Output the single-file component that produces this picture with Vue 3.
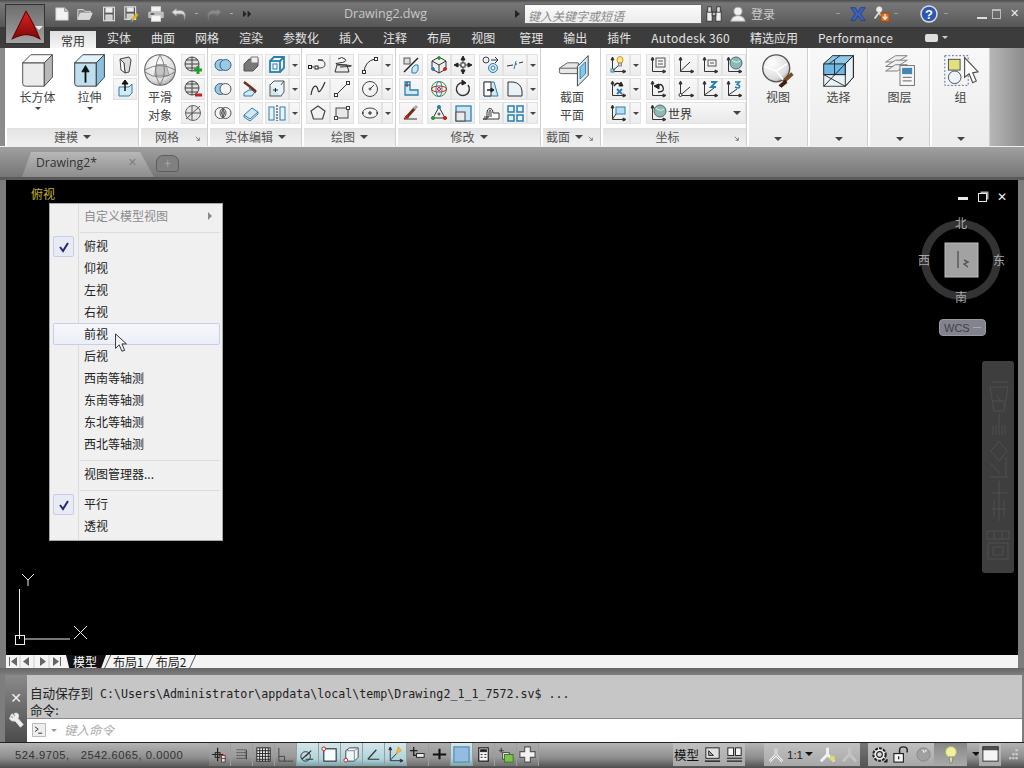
<script setup>
import { h } from 'vue'

const P = (d, s = '#444', f = 'none', w = 1) => `<path d="${d}" stroke="${s}" fill="${f}" stroke-width="${w}"/>`
const C = (x, y, r, s = '#444', f = 'none', w = 1) => `<circle cx="${x}" cy="${y}" r="${r}" stroke="${s}" fill="${f}" stroke-width="${w}"/>`
const R = (x, y, w, ht, s = '#444', f = 'none', sw = 1) => `<rect x="${x}" y="${y}" width="${w}" height="${ht}" stroke="${s}" fill="${f}" stroke-width="${sw}"/>`
const B = '#2b7fb0', L = '#bfe0f0', D = '#444', K = '#222', O = 'none'
const axes = (c = D) => P('M4.5 3V16.5H17', c) + P('M4.5 2L3 5H6Z', c, c) + P('M18 16.5L15 15V18Z', c, c)

const icons = {
  box: P('M3 12H27V38H6Q3 38 3 35Z', D, '#ececec') + P('M3 12L12 3H36L27 12Z', D, '#f9f9f9') + P('M27 12L36 3V28L27 38Z', D, '#b8b8b8'),
  extrude: P('M3 12H27V38H6Q3 38 3 35Z', '#333', '#bfdfee') + P('M3 12L12 3H36L27 12Z', '#333', '#e2f2fa') + P('M27 12L36 3V28L27 38Z', '#333', '#8cc0dc') + P('M15 34V20', '#111', O, 2) + P('M15 15L11 22H19Z', '#111', '#111'),
  sphere: '<defs><radialGradient id="sg" cx=".4" cy=".3" r=".8"><stop offset="0" stop-color="#fff"/><stop offset=".7" stop-color="#ddd"/><stop offset="1" stop-color="#999"/></radialGradient></defs>' + C(20, 20, 17, '#666', 'url(#sg)', 1.2) + P('M16 14H27L30 26H14Z', '#999', '#c4c4c4') + P('M3 20Q20 10 37 20M3 22Q20 34 37 22M20 3Q10 20 20 37M20 3Q30 20 20 37', '#777'),
  section: P('M6 18L15 12H27V24H8Q6 24 6 22Z', '#555', '#e8e8e8') + P('M6 18H27', '#555') + P('M26 16L38 4V26L26 38Z', '#333', '#d8e8f0') + P('M29 17L35 11V24L29 30Z', B, '#8cc4e4'),
  view: '<defs><radialGradient id="vg" cx=".35" cy=".3" r=".85"><stop offset="0" stop-color="#fff"/><stop offset=".7" stop-color="#ddd"/><stop offset="1" stop-color="#888"/></radialGradient></defs>' + C(18, 17, 15, '#555', 'url(#vg)', 1.5) + P('M5 15L18 20L30 12M18 20L26 30', '#fff', O, 2) + P('M26 32L36 23', '#7a4a20', O, 4) + P('M21 36L28 30L30 33L24 38Z', '#402010', '#402010'),
  select: P('M3 12L13 3H36V27L27 37H3Z', '#333', '#e8f2f8') + P('M3 12H27V24H3Z', '#333', '#6fb8e4') + P('M3 12L13 3H36L27 12Z', '#333', '#8ec8ea') + P('M3 24L27 37M27 12V37M27 12L36 3V27L27 37M15 8V24M3 24H27M21 3L9 12', '#222') + P('M3 37L27 12', '#111'),
  layer: P('M4 10L15 3H28L17 10Z', '#777', '#efefef') + P('M4 15L15 8H28L17 15Z', '#777', '#efefef') + P('M4 20L15 13H28L17 20Z', '#777', '#efefef') + R(20, 14, 16, 22, '#666', '#f8f8f8') + R(23, 17, 10, 6, B, '#4f82ad') + P('M23 27H33M23 31H33', '#555'),
  group: R(2, 3, 26, 33, '#4a5a9a', O, 1).replace('/>', ' stroke-dasharray="2 2"/>') + R(6, 7, 13, 12, '#444', '#e0e080') + C(13, 27, 7, '#444', '#eef4fa') + P('M24 5V27L29 23L33 33L37 31L33 22L39 21Z', '#555', '#fff', 1.3),
  wedge: P('M5 4L14 2L16 5L14 17L10 18L9 8Z', D, '#ddd') + P('M5 4L9 8L10 18L6 15Z', D, '#fff'),
  press: P('M4 8H14L17 5V14L14 17H4Z', '#2b7fb0', '#d4e8f2') + P('M10 12V4', '#111', O, 1.5) + P('M10 1L7 5H13Z', '#111', '#111') + P('M14 8L17 5', B),
  madd: C(9, 9, 7, D, '#ddd') + P('M2 9H16M9 2V16M3 5H15M3 13H15', D) + P('M15 11V19M11 15H19', '#2a9a30', O, 3),
  msub: C(9, 9, 7, D, '#ddd') + P('M2 9H16M9 2V16M3 5H15M3 13H15', D) + P('M12 16H19', '#c02020', O, 3),
  mcrease: C(10, 10, 7.5, '#666', '#e4e4e4') + P('M3 16L17 3M3 10H17M9 3V17', '#555'),
  union: C(7.5, 10, 5.5, '#2b6a90', '#9cc8e0') + C(12.5, 10, 5.5, '#2b6a90', '#9cc8e0'),
  subtract: C(7.5, 10, 5.5, '#2b6a90', '#9cc8e0') + C(12.5, 10, 5.5, '#555', '#f4f4f4'),
  intersect: C(7.5, 10, 5.5, '#555', '#f4f4f4') + C(12.5, 10, 5.5, '#555', 'none') + P('M10 5.5Q13 10 10 14.5Q7 10 10 5.5Z', '#555', '#9a9a9a'),
  efill: P('M3 9L8 4H17V11L12 16H3Z', '#555', '#777') + P('M10 2H17V8H10Z', '#777', '#eee'),
  etaper: P('M3 14L8 11H15L11 17H3Z', B, '#d4e8f2') + P('M3 3L12 10L15 13', '#703020', O, 2.5) + P('M8 9L15 14', '#555'),
  eshell: P('M3 12L11 5L17 9L9 16Z', B, '#d4e8f2') + P('M3 12V14L9 18L17 11V9', B),
  ecube: R(3, 6, 10, 11, B, '#e8f4fa', 1.8) + P('M3 6L7 2H17V13L13 17M13 6L17 2', B, O, 1.8) + R(6, 9, 4, 5, B, '#fff'),
  eface: R(3, 6, 11, 11, '#555', '#d4e8f2') + P('M3 6L7 2H17V13L14 17M14 6L17 2', '#555', '#e8f4fa') + P('M6 11H11M8.5 9V13', K),
  esplit: R(2, 4, 5, 13, B, '#e8f4fa') + R(13, 4, 5, 13, B, '#e8f4fa') + P('M10 2V18', K, O, 1).replace('/>', ' stroke-dasharray="2 1"/>'),
  pedit: P('M2 12H6M15 5H10', K) + P('M10 5Q17 5 17 9T12 13H8', D) + R(0.5, 10.5, 3, 3, K, '#fff') + R(7, 11, 3, 3, K, '#fff'),
  mtext: P('M3 17L5 10H15L17 17Z', '#333', '#eaeaea') + P('M6 4Q10 1 13 4T7 8T13 10T8 12', '#333'),
  arc3: P('M4 17Q5 6 15 4', '#333') + R(2.5, 15.5, 3, 3, '#333', '#fff') + R(14.5, 2.5, 3, 3, '#333', '#fff') ,
  spline: P('M3 16C5 4 9 6 10 11S15 8 17 3', '#333', O, 1.2),
  line: P('M4 16L16 4', '#333') + R(2.5, 14.5, 3, 3, '#333', '#fff') + R(14.5, 2.5, 3, 3, '#333', '#fff'),
  circle: C(10, 10, 7.5, '#444', '#f4f4f4') + P('M10 10L14 6', '#444') + C(10, 10, 1, '#444'),
  polygon: P('M10 3L17 8L14.5 16H5.5L3 8Z', '#444', '#f2f2f2', 1.2),
  rect: R(4, 5, 12, 10, '#444', '#e8e8e8') + R(2.5, 13.5, 3, 3, '#444', '#fff') + R(14.5, 3.5, 3, 3, '#444', '#fff'),
  ellipse: `<ellipse cx="10" cy="10" rx="7.5" ry="5" stroke="#444" fill="#f4f4f4"/>` + P('M8 10H12M10 8V12', K) + P('M2 10H4M16 10H18', K),
  scale: P('M3 17L17 3', '#222', O, 1.5) + R(3, 3, 6, 6, '#555', '#ddd') + P('M11 13L14 10H17V15L15 18H11Z', B, '#cfe6f2'),
  m3d: P('M10 2L17 6V14L10 18L3 14V6Z', '#333', '#efefef') + P('M10 10L3 6M10 10L17 6M10 10V18', '#333') + C(10, 3, 1.4, '#2a9a30', '#2a9a30') + C(16, 14, 1.4, '#c02020', '#c02020') + C(4, 14, 1.4, B, B),
  move: P('M10 3V17M3 10H17', '#333') + P('M10 1L8 5H12ZM10 19L8 15H12ZM1 10L5 8V12ZM19 10L15 8V12Z', '#222', '#222') + R(8, 8, 4, 4, '#333', '#fff'),
  stretch: P('M4 3H9V11H17V16H4Z', B, '#d4e8f2', 1.3) + P('M6 3V8M4 6H9', '#333'),
  rot3d: C(10, 10, 7.5, '#2a9a30') + `<ellipse cx="10" cy="10" rx="7.5" ry="3" stroke="#c02020" fill="none"/><ellipse cx="10" cy="10" rx="3" ry="7.5" stroke="${B}" fill="none"/>` + C(10, 10, 1.5, '#c02020', '#fdd'),
  rotate: P('M15 6A6.5 6.5 0 1 1 10 3.5', '#333', O, 1.5) + P('M9 1L13 4L9 6Z', '#222', '#222'),
  match: P('M3 16H16', '#333') + P('M5 15L14 5', '#6b3018', O, 3) + P('M3 16L6 12L8 14Z', '#c02020', '#c02020') + P('M13 6L16 3', '#aaa', O, 3),
  triad: P('M10 4L16 15H4Z', '#333') + C(10, 4, 1.6, B, B) + C(16, 15, 1.6, '#c02020', '#c02020') + C(4, 15, 1.6, '#2a9a30', '#2a9a30') + C(10, 11, 1, '#333'),
  uniscale: R(3, 3, 15, 15, B, '#cfe6f2', 1.3) + R(3, 9, 9, 9, '#444', '#eaeaea'),
  copy: C(5, 5, 3, '#444', '#eee') + C(12, 13, 4.5, B, '#cfe6f2') + C(12, 13, 2, B, '#fff') + P('M10 5H17M14 2L17 5L14 8', '#333'),
  breakl: P('M2 11L8 10M10 9L12 9M14 8L18 7', '#333') + P('M9 14L11 6', B) ,
  taperf: P('M3 3H13L17 17H3Z', B, '#d4e8f2') + P('M3 3H10V17H3Z', '#333', '#fff') + P('M6 11H12', K, O, 1.5) + P('M13 11L10 9V13Z', K, K),
  filletf: P('M3 17V3H8Q16 4 17 12V17Z', '#333', '#e8f3f8'),
  offset: P('M2 16H6V10C6 4 12 4 12 10H18V16H2', '#333', '#fff') + P('M3 14H8V10C8 6 10 6 10 10V14', '#333'),
  array: R(3, 3, 6, 6, B, '#e8f4fa', 1.5) + R(12, 3, 6, 6, B, '#e8f4fa', 1.5) + R(3, 12, 6, 6, B, '#e8f4fa', 1.5) + R(12, 12, 6, 6, B, '#e8f4fa', 1.5),
  ulight: axes('#333') + R(3, 14, 3, 3, B, '#fff') + P('M4.5 16L11 10', '#333') + `<ellipse cx="12" cy="5" rx="3" ry="3.5" stroke="#c8a020" fill="#ffe880"/>` + R(10.5, 8, 3, 3, '#888', '#ccc'),
  ux: axes('#333') + P('M6 7Q9 2 13 6', K, O, 1.5) + P('M13 3L15 7L11 7Z', K, K) + P('M9 10L14 15M14 10L9 15', B, O, 1.8),
  uface: axes('#333') + R(8, 4, 9, 7, B, '#bcdcf0') + P('M4.5 16L8 11', '#333'),
  unamed: axes('#333') + R(8, 3, 9, 9, '#555', '#f4f4f4') + P('M10 6H15M10 9H15', '#555'),
  uprev: axes('#333') + P('M8 8Q13 3 15 8T10 13', K, O, 1.3) + P('M6 7L11 5V10Z', K, K),
  uworld: axes('#333') + P('M4.5 16L14 7', '#333'),
  uview: axes('#333') + R(8, 5, 8, 6, '#555', '#f4f4f4') + P('M10 8H14', '#555'),
  uglobe: axes('#333') + C(12, 8, 6, '#567', '#8fb8b0') + P('M8 5Q12 9 16 6', '#cfe'),
  uorigin: axes('#333') + P('M4.5 16L14 8', '#333') + C(4.5, 16, 1.5, '#333', '#fff'),
  uz: axes('#333') + P('M4.5 16L14 9', '#333') + P('M11 3H16L11 8H16', B, O, 1.8),
  u3: axes('#333') + P('M4.5 16L13 10', '#333') + P('M11 3H15.5L13 5.5Q16 6 15.5 8T11 8', B, O, 1.5),
  qnew: P('M3 3H13L17 7V17H3Z', '#aaa', '#f2f2f2') + P('M13 3V7H17', '#888', '#ccc'),
  qopen: P('M2 16V5H8L10 7H16V9', '#ddd', '#888') + P('M2 16L5 9H18L15 16Z', '#ddd', '#d8d8d8'),
  qsave: R(4, 2.5, 12, 15, '#ddd', '#555', 1.3) + R(6.5, 3, 7, 5, '#ddd', '#eee') + R(6.5, 11, 7, 6, '#ddd', '#ccc'),
  qsaveas: R(2, 2, 12, 14, '#ddd', '#555', 1.3) + R(4.5, 3, 7, 4, '#ddd', '#eee') + R(4.5, 10, 7, 6, '#ddd', '#ccc') + P('M9 18L16 10', '#e0b020', O, 3) + P('M8 19L10 16', '#3a7ab0', O, 2),
  qprint: R(5, 2, 10, 5, '#ddd', '#f2f2f2') + P('M2 8H18V14H2Z', '#ccc', '#bbb') + R(5, 12, 10, 6, '#ddd', '#f6f6f6') + P('M4 10H8', '#444', O, 1.5),
  qundo: P('M7 4L2 8L7 12V10H13Q16 10 16 14V16Q19 7 12 6H7Z', '#999', '#ddd'),
  qredo: P('M13 4L18 8L13 12V10H7Q4 10 4 14V16Q1 7 8 6H13Z', '#777', '#8a8a8a'),
  qmore: P('M5 7L8 10L5 13ZM10 7L13 10L10 13Z', '#222', '#222'),
  logo: '<defs><linearGradient id="lg" x1="0" y1="0" x2="0" y2="1"><stop offset="0" stop-color="#e02020"/><stop offset="1" stop-color="#7c0a0a"/></linearGradient></defs>' + P('M16 3L3 29Q12 25 17 25Q24 26 29 29Q23 14 16 3Z', '#600', 'url(#lg)'),
  binoc: R(2, 7, 6, 11, '#333', '#eee') + R(12, 7, 6, 11, '#333', '#eee') + R(3, 2, 4, 6, '#333', '#ddd') + R(13, 2, 4, 6, '#333', '#ddd') + R(8, 8, 4, 4, '#333', '#bbb'),
  user: C(10, 7, 4.5, '#aaa', '#f0f0f0') + P('M2 18Q3 13 8 12H12Q17 13 18 18Z', '#aaa', '#f0f0f0'),
  xlogo: P('M2 3L7 3L10 8L13 3L18 3L13 10L18 17H13L10 12L7 17H2L7 10Z', '#1f3f8f', '#3a62b8'),
  exch: C(8, 5, 3, '#ddd', '#eee') + P('M3 15L8 8L10 12', '#ddd', O, 2) + R(10, 9, 9, 9, '#a04810', '#e07020') + P('M14.5 10V15M12 13L14.5 16L17 13', '#fff', O, 1.3),
  help: C(10, 10, 8, '#ddd', '#2d55b4', 1.5) + `<text x="10" y="14.5" font-size="13" font-weight="700" text-anchor="middle" fill="#fff" font-family="Liberation Sans">?</text>`,
  sinfer: P('M8 3V17M2 10H14', K, O, 1.3) + R(5.5, 8, 5, 5, K, O) + R(12, 11, 4, 4, '#c02020', '#eee') + R(12, 14, 4, 4, '#444', '#ddd'),
  ssnap: P('M5 5H15M5 8H15M5 11H15M5 14H15', K, O, 1).replace('/>', ' stroke-dasharray="1 1"/>') + P('M15 5V15', K),
  sgrid: R(3, 3, 14, 14, K, '#eee') + P('M3 6H17M3 9H17M3 12H17M3 15H17M6 3V17M9 3V17M12 3V17M15 3V17', K),
  sortho: P('M3 3V17H18M3 12H9V17', '#444'),
  spolar: C(8, 12, 5, '#333') + P('M4 15L14 6M8 15H16M8 12L12 8', '#333', O, 1.2),
  sosnap: R(4, 4, 13, 13, '#333', '#f6fbfd', 1.2) + C(4, 4, 2, '#c02020', '#fff'),
  s3d: P('M4 6L8 3H17V13L13 17H4Z', '#444', '#eef7fa') + P('M4 6H13V17M13 6L17 3', '#888') + C(4, 16, 2, '#c02020', '#fff'),
  sotrack: P('M4 15L13 5M4 15H16', '#333', O, 1.2),
  sducs: axes('#333') + P('M4.5 16L12 8', '#333') + P('M13 2L16 6L11 9Z', '#e0a020', '#f0c040'),
  sdyn: P('M2 6H10M6 2V11H17', '#222', O, 1.4) + R(9, 9, 8, 4, K, '#eee'),
  slw: P('M3 10H17M10 4V15', '#111', O, 2.2),
  stp: R(2, 2, 16, 16, '#5a8ab0', '#94bce0', 1.3),
  sqp: R(5, 3, 10, 14, '#222', '#f4f4f4', 1.3) + R(7, 5, 6, 2, '#222', '#222') + P('M7 10H9M11 10H13M7 13H9M11 13H13', '#222'),
  ssc: P('M3 6H8M5.5 3V8', '#333') + R(7, 8, 7, 7, '#444', '#e8e8e8') + R(9, 10, 9, 8, '#3a7a20', '#80c050'),
  splus: P('M7 2H13V7H18V13H13V18H7V13H2V7H7Z', '#555', '#f2f2f2', 1.2),
  smodel: R(3, 3, 14, 11, '#222', '#e0e0e0') + P('M6 11V6L11 11Z', '#222', '#aaa') + P('M2 17H18', '#222', O, 1.5),
  slayout: R(3, 3, 6, 8, '#222', '#f4f4f4') + R(11, 3, 6, 8, '#222', '#f4f4f4') + P('M2 14H18M2 17H18', '#222', O, 1.2),
  sanno: P('M10 3L10 10M10 10L3 17M10 10L17 17', '#f2f2f2', O, 3) + P('M10 3L10 10M10 10L3 17M10 10L17 17', '#778', O, 0.6),
  sanno2: P('M10 3L10 10M10 10L3 17M10 10L17 17', '#f2f2f2', O, 3) + C(15, 14, 2.5, '#cc9', '#f0e040'),
  sanno3: P('M10 3L10 10M10 10L3 17M10 10L17 17', '#c4c4c4', O, 3),
  sgear: C(10, 10, 6.5, '#222', '#eee', 2.2).replace('/>', ' stroke-dasharray="3 1.2"/>') + C(10, 10, 3, '#222', '#ddd', 1.2) + P('M15 18L18 15V18Z', K, K),
  slock: R(2, 9, 10, 9, '#222', '#f4f4f4', 1.2) + P('M8 9V5Q8 2 12 2T16 5V8', '#222', O, 1.5) + P('M7 12V15', K, O, 1.4),
  shw: C(10, 10, 7, '#888', '#a0a0a0') + P('M9 5L11 8M13 5L12 7', '#eee', O, 1.4),
  sbulb: C(10, 7, 5.5, '#b0b070', '#f0f0a0') + P('M8 12L9 18H11L12 12Z', '#888', '#dde090'),
  swin: R(2, 2, 16, 15, '#333', '#f4f4f4') + R(2, 2, 16, 3, '#333', '#555'),
  grip: P('M16 3H18V5H16ZM12 8H14V10H12ZM16 8H18V10H16ZM8 13H10V15H8ZM12 13H14V15H12ZM16 13H18V15H16Z', '#ccc', '#ccc'),
  corner: P('M6 6L14 14M14 8V14H8', '#555', O, 1.6),
  cmd: R(2, 2, 16, 16, '#aaa', '#eee') + P('M5 6L9 9L5 12M9 14H14', '#333', O, 1.2),
  wrench: P('M4 5L6 3L8 6L9 5L8 3Q12 1 13 5Q13 7 12 8L18 15L15 18L9 11Q5 12 3 9Q3 7 4 6L6 8L7 7Z', '#ddd', '#eee'),
}

const Ic = (p) => {
  const size = Number(p.s) || 20
  const box = p.b || (size > 24 ? '0 0 40 40' : '0 0 20 20')
  return h('svg', { viewBox: box, width: size, height: size, innerHTML: icons[p.n] || '' })
}
Ic.props = ['n', 's', 'b']

const panels = [
  { t: '建模', w: 132, mode: 'tri', pad: 8, items: [
    { big: 'box', l: ['长方体'], w: 45, drop: 1 },
    { big: 'extrude', l: ['拉伸'], w: 45, drop: 1, ml: 7 },
    { ml: 1, rows: [['wedge'], ['press']] },
  ] },
  { t: '网格', w: 67, mode: 'corner', pad: 1, items: [
    { big: 'sphere', l: ['平滑', '对象'], w: 36 },
    { ml: 3, rows: [['madd'], ['msub'], ['mcrease']] },
  ] },
  { t: '实体编辑', w: 92, mode: 'tri', pad: 1, items: [
    { rows: [['union'], ['subtract'], ['intersect']] },
    { ml: 4, rows: [['efill', '_s', 'ecube+'], ['etaper', '_s', 'eface+'], ['eshell', '_s', 'esplit+']] },
  ] },
  { t: '绘图', w: 92, mode: 'tri', pad: 2, items: [
    { rows: [['pedit', 'mtext'], ['spline', 'line'], ['polygon', 'rect']] },
    { ml: 4, rows: [['arc3+'], ['circle+'], ['ellipse+']] },
  ] },
  { t: '修改', w: 143, mode: 'tri', pad: 1, items: [
    { rows: [['scale'], ['stretch'], ['match']] },
    { ml: 4, rows: [['m3d', 'move'], ['rot3d', 'rotate'], ['triad', 'uniscale']] },
    { ml: 4, rows: [['copy', 'breakl+'], ['taperf', 'filletf+'], ['offset', 'array+']] },
  ] },
  { t: '截面', w: 58, mode: 'both', pad: 0, items: [
    { big: 'section', l: ['截面', '平面'], w: 58 },
  ] },
  { t: '坐标', w: 144, mode: 'corner', pad: 3, items: [
    { rows: [['ulight+'], ['ux+'], ['uface+']] },
    { ml: 5, rows: [['unamed', '_g', 'uworld', 'uview', 'uglobe'], ['uprev', '_g', 'uorigin', 'uz', 'u3'], ['combo']] },
  ] },
]
const tall = [
  { n: 'view', t: '视图', w: 59 },
  { n: 'select', t: '选择', w: 58 },
  { n: 'layer', t: '图层', w: 60 },
  { n: 'group', t: '组', w: 58 },
]
const isIcon = (c) => !c.startsWith('_') && c !== 'combo'
const iconOf = (c) => c.replace('+', '')
const hasDrop = (c) => c.endsWith('+')

const qat = ['qnew', 'qopen', 'qsave', 'qsaveas', 'qprint', 'qundo', '-', 'qredo', '-', 'qmore']
const tabs = [
  { t: '实体' }, { t: '曲面' }, { t: '网格' }, { t: '渲染' }, { t: '参数化' }, { t: '插入' },
  { t: '注释' }, { t: '布局' }, { t: '视图' }, { t: '管理', wide: 1 }, { t: '输出' }, { t: '插件' },
  { t: 'Autodesk 360', lat: 1 }, { t: '精选应用' }, { t: 'Performance', lat: 1 },
]
const menuViews = ['仰视', '左视', '右视']
const menuAfter = ['后视', '西南等轴测', '东南等轴测', '东北等轴测', '西北等轴测']
const statusLeft = [
  ['sinfer'], ['ssnap'], ['sgrid'], ['sortho'], ['spolar', 1], ['sosnap', 1], ['s3d', 1], ['sotrack', 1], ['sducs', 1],
  ['sdyn'], ['slw'], ['stp', 1], ['sqp'], ['ssc'], ['splus'],
]
</script>

<template>
  <div class="app">
    <div class="appbtn">
      <Ic n="logo" s="34" b="0 0 32 32" />
      <i class="appdrop"></i>
    </div>

    <header class="title">
      <div class="qat">
        <template v-for="(q, i) in qat" :key="i">
          <i v-if="q === '-'" class="qdot"></i>
          <span v-else class="qbtn"><Ic :n="q" s="18" /></span>
        </template>
      </div>
      <div class="docname">Drawing2.dwg</div>
      <i class="searchtri"></i>
      <div class="search">键入关键字或短语</div>
      <span class="ti binoc"><Ic n="binoc" s="18" /></span>
      <span class="ti user"><Ic n="user" s="18" /></span>
      <span class="login">登录</span>
      <i class="tdash d1"></i>
      <span class="ti xl"><Ic n="xlogo" s="18" /></span>
      <span class="ti ex"><Ic n="exch" s="18" /></span>
      <i class="tdash d2"></i>
      <span class="ti hp"><Ic n="help" s="20" /></span>
      <i class="tdash d3"></i>
      <div class="winbtns">
        <i class="wmin"></i>
        <i class="wmax"></i>
        <span class="wclose">✕</span>
      </div>
    </header>

    <nav class="tabs">
      <span class="tab active">常用</span>
      <span v-for="t in tabs" :key="t.t" class="tab" :class="{ wide: t.wide, lat: t.lat }">{{ t.t }}</span>
      <span class="tabcam"><i class="cam"></i><i class="camdrop"></i></span>
    </nav>

    <div class="ribbon">
      <section
        v-for="p in panels"
        :key="p.t"
        class="panel"
        :style="{ width: p.w + 'px' }"
      >
        <div class="pbody" :style="{ paddingLeft: p.pad + 'px' }">
          <template v-for="(it, i) in p.items" :key="i">
            <div
              v-if="it.big"
              class="big"
              :style="{ width: it.w + 'px', marginLeft: (it.ml || 0) + 'px' }"
            >
              <Ic :n="it.big" s="36" />
              <span v-for="l in it.l" :key="l" class="biglabel">{{ l }}</span>
              <i v-if="it.drop" class="tri small"></i>
            </div>
            <div v-else class="col" :style="{ marginLeft: (it.ml || 0) + 'px' }">
              <div v-for="(row, r) in it.rows" :key="r" class="row">
                <template v-for="(c, k) in row" :key="k">
                  <i v-if="c === '_s'" class="gap-s"></i>
                  <i v-else-if="c === '_g'" class="gap-g"></i>
                  <div v-else-if="c === 'combo'" class="combo">
                    <Ic n="uglobe" s="20" />
                    <span>世界</span>
                    <i class="tri comboarrow"></i>
                  </div>
                  <template v-else-if="isIcon(c)">
                    <div class="cell"><Ic :n="iconOf(c)" s="20" /></div>
                    <div v-if="hasDrop(c)" class="split"><i class="tri small"></i></div>
                  </template>
                </template>
              </div>
            </div>
          </template>
        </div>
        <footer class="pfoot" :class="{ cornered: p.mode !== 'tri' }">
          <span>{{ p.t }}</span>
          <i v-if="p.mode === 'tri' || p.mode === 'both'" class="tri"></i>
          <span v-if="p.mode === 'corner' || p.mode === 'both'" class="pcorner"><Ic n="corner" s="9" /></span>
        </footer>
      </section>
      <section v-for="p in tall" :key="p.n" class="panel tall" :style="{ width: p.w + 'px' }">
        <Ic :n="p.n" s="36" />
        <span class="talllabel">{{ p.t }}</span>
        <i class="tri talltri"></i>
      </section>
    </div>
    <div class="whiteline"></div>

    <div class="docbar">
      <div class="doctab">
        <span class="docname2">Drawing2*</span>
        <span class="docx">✕</span>
      </div>
      <div class="docplus"><span>+</span></div>
    </div>
    <div class="darkgap"></div>

    <main class="viewport">
      <span class="vlabel">俯视</span>

      <div class="menu">
        <div class="mitem disabled"><span>自定义模型视图</span><i class="marrow"></i></div>
        <hr class="msep" />
        <div class="mitem checked"><b class="check"><svg viewBox="0 0 14 14" width="14" height="14"><path d="M3 7L6 11L11 3" stroke="#26267a" stroke-width="2" fill="none"/></svg></b><span>俯视</span></div>
        <div v-for="m in menuViews" :key="m" class="mitem"><span>{{ m }}</span></div>
        <div class="mitem hover"><span>前视</span></div>
        <div v-for="m in menuAfter" :key="m" class="mitem"><span>{{ m }}</span></div>
        <hr class="msep" />
        <div class="mitem"><span>视图管理器...</span></div>
        <hr class="msep" />
        <div class="mitem checked"><b class="check"><svg viewBox="0 0 14 14" width="14" height="14"><path d="M3 7L6 11L11 3" stroke="#26267a" stroke-width="2" fill="none"/></svg></b><span>平行</span></div>
        <div class="mitem"><span>透视</span></div>
        <svg class="cursor" viewBox="0 0 14 22" width="14" height="20"><path d="M1 1V17L5 13L8 20L11 19L8 12L13 12Z" fill="#f4f4f4" stroke="#223" stroke-width="1"/></svg>
      </div>

      <div class="vpctl">
        <i class="vmin"></i>
        <i class="vmax"></i>
        <span class="vclose">✕</span>
      </div>

      <svg class="cube" viewBox="0 0 100 100" width="100" height="100">
        <circle cx="50" cy="50" r="36" stroke="#333" stroke-width="8" fill="none" />
        <rect x="34" y="33" width="33" height="34" fill="#a2a2a2" stroke="#bbb" />
        <path d="M47 41V58M53 50L57 52L53 54L57 57" stroke="#555" stroke-width="1.4" fill="none" />
        <g font-family="'Noto Sans CJK SC', sans-serif" font-size="12" fill="#a8a8a8" text-anchor="middle">
          <text x="50" y="18">北</text>
          <text x="50" y="92">南</text>
          <text x="13" y="55">西</text>
          <text x="88" y="55">东</text>
        </g>
      </svg>
      <div class="wcs"><span>WCS</span><i></i></div>

      <div class="navbar">
        <svg viewBox="0 0 32 212" width="32" height="212">
          <g stroke="#4e4e4e" fill="none">
            <path d="M10 21H26M8 26H26M8 26L12 50H22L26 26M14 34L24 46M10 40H24" />
            <path d="M17 52V64" />
            <path d="M11 64V74M14 64V74M17 64V74M20 64V74M23 64V74" />
            <path d="M17 80L25 90L17 100L9 90ZM8 102L18 112M24 96V116M8 116H26" />
            <path d="M17 120V126M10 132H26M17 126V160M10 148H24M12 140V156M22 140V156" />
            <path d="M5 170H27V178H5ZM12 170V178M20 170V178M6 182H26V198H6ZM11 186H21V194H11Z" />
          </g>
        </svg>
      </div>

      <svg class="ucs" viewBox="0 0 80 80" width="80" height="80">
        <g stroke="#eee" fill="none">
          <path d="M5.5 18V68M10 68H56" />
          <rect x="1.5" y="64.5" width="9" height="9" />
          <path d="M8 3L14 9L20 3M14 9V15" />
          <path d="M60 55L73 68M73 55L60 68" />
        </g>
      </svg>
    </main>

    <div class="layouts">
      <div class="lnav">
        <svg viewBox="0 0 58 13" width="58" height="13">
          <g fill="#666">
            <path d="M3 2V11H4V2ZM11 2L5 6.5L11 11Z" />
            <path d="M23 2L17 6.5L23 11Z" />
            <path d="M34 2L40 6.5L34 11Z" />
            <path d="M47 2L53 6.5L47 11ZM54 2V11H55V2Z" />
          </g>
          <path d="M14 0V13M28 0V13M43 0V13" stroke="#ccc" />
        </svg>
      </div>
      <span class="ltab on">模型</span>
      <i class="lslash"></i>
      <span class="ltab">布局1</span>
      <i class="lslash"></i>
      <span class="ltab">布局2</span>
      <i class="lslash"></i>
    </div>
    <div class="lgap"></div>

    <section class="command">
      <aside class="cmdside">
        <i class="cmdgrip"></i>
        <span class="cmdx">✕</span>
        <Ic n="wrench" s="18" />
      </aside>
      <div class="cmdmain">
        <div class="cmdhist">
          <div><span class="cjk">自动保存到</span> C:\Users\Administrator\appdata\local\temp\Drawing2_1_1_7572.sv$ ...</div>
          <div><span class="cjk">命令:</span></div>
        </div>
        <div class="cmdinput">
          <Ic n="cmd" s="16" />
          <i class="tri small cmddrop"></i>
          <span class="cmdph">键入命令</span>
        </div>
      </div>
    </section>

    <footer class="status">
      <span class="coords">524.9705,&nbsp;&nbsp; 2542.6065, 0.0000</span>
      <div class="stgroup">
        <span v-for="s in statusLeft" :key="s[0]" class="st" :class="{ act: s[1] }"><Ic :n="s[0]" s="19" /></span>
      </div>
      <span class="stmodel">模型</span>
      <span class="st lite"><Ic n="smodel" s="19" /></span>
      <span class="st lite"><Ic n="slayout" s="19" /></span>
      <div class="annot">
        <Ic n="sanno" s="18" />
        <span>1:1</span>
        <i class="tri black"></i>
      </div>
      <span class="st lite"><Ic n="sanno2" s="19" /></span>
      <span class="st lite"><Ic n="sanno3" s="19" /></span>
      <i class="stsep"></i>
      <span class="st lite"><Ic n="sgear" s="19" /></span>
      <span class="st lite"><Ic n="slock" s="19" /></span>
      <span class="st lite"><Ic n="shw" s="19" /></span>
      <div class="lamp"><Ic n="sbulb" s="20" /></div>
      <i class="tri black lampdrop"></i>
      <span class="st lite"><Ic n="swin" s="19" /></span>
      <span class="stgrip"><Ic n="grip" s="16" /></span>
    </footer>
  </div>
</template>

<style>
html, body { margin: 0; background: #777; }
</style>

<style scoped>
.app {
  position: relative;
  width: 1024px;
  height: 768px;
  overflow: hidden;
  display: flex;
  flex-direction: column;
  background: #7d7d7d;
  font: 12px "Noto Sans CJK SC", sans-serif;
  color: #333;
}
svg { display: block; flex: none; }
i { display: block; flex: none; }

.appbtn {
  position: absolute;
  left: 5px;
  top: 4px;
  width: 40px;
  height: 40px;
  box-sizing: border-box;
  border: 1px solid #333;
  background: linear-gradient(#6e6e6e, #8c8c8c 60%, #a4a4a4);
  padding: 3px 0 0 3px;
  z-index: 3;
}
.appdrop {
  position: absolute;
  left: 29px;
  top: 21px;
  border: 4px solid transparent;
  border-top-color: #eee;
  border-bottom-width: 0;
}

.title {
  height: 27px;
  flex: none;
  display: flex;
  align-items: center;
  background: linear-gradient(#4c4c4c, #767676 12%, #6a6a6a 50%, #565656);
  color: #ddd;
}
.qat { display: flex; align-items: center; margin-left: 50px; width: 210px; }
.qbtn { width: 24px; display: flex; justify-content: center; }
.qdot { width: 3px; height: 1px; margin: 0 4px; background: #aaa; }
.docname {
  width: 83px;
  margin-left: 84px;
  color: #c8c8c8;
  font: 12.5px "Open Sans", sans-serif;
  white-space: nowrap;
}
.searchtri {
  margin-left: 88px;
  border: 4px solid transparent;
  border-left: 5px solid #222;
  border-right: 0;
}
.search {
  width: 178px;
  height: 20px;
  box-sizing: border-box;
  margin-left: 4px;
  padding-left: 3px;
  background: linear-gradient(#fafafa, #ececec);
  border: 1px solid #666;
  color: #888;
  font-style: italic;
  line-height: 21px;
}
.ti { display: block; }
.binoc { margin-left: 3px; }
.user { margin-left: 6px; }
.login { margin-left: 4px; width: 24px; color: #ccc; font-size: 12px; }
.tdash { height: 1px; width: 4px; background: #999; }
.d1 { margin-left: 61px; }
.xl { margin-left: 9px; }
.ex { margin-left: 5px; }
.d2 { margin-left: 4px; }
.hp { margin-left: 21px; }
.d3 { margin-left: 5px; }
.winbtns { display: flex; align-items: center; margin-left: 29px; }
.wmin { width: 10px; height: 2px; background: #ddd; margin-top: 8px; }
.wmax { width: 7px; height: 7px; border: 1px solid #bbb; border-top-width: 2px; margin-left: 5px; }
.wclose { margin-left: 9px; font: 700 11px "DejaVu Sans", sans-serif; color: #eee; }

.tabs {
  height: 21px;
  flex: none;
  display: flex;
  align-items: flex-end;
  background: #3c3c3c;
  padding-left: 50px;
}
.tab {
  height: 21px;
  line-height: 21px;
  margin-right: 20px;
  color: #e2e2e2;
  white-space: nowrap;
}
.tab.lat { letter-spacing: 0.3px; }
.tab.active {
  height: 17px;
  line-height: 19px;
  width: 46px;
  text-align: center;
  margin-right: 11px;
  background: linear-gradient(#dedede, #f6f6f6);
  color: #333;
}
.tab.wide { margin-left: 4px; }
.tabcam { display: flex; align-items: center; height: 21px; margin-left: 12px; }
.cam { width: 13px; height: 8px; background: #ddd; border-radius: 2px; }
.camdrop { margin-left: 4px; border: 3px solid transparent; border-top-color: #ccc; border-bottom: 0; }

.ribbon {
  height: 98px;
  flex: none;
  display: flex;
  gap: 2px;
  padding-left: 7px;
  background:
    linear-gradient(#fff, #fff) 5px 0 / 985px 100% no-repeat,
    linear-gradient(90deg, #8a8a8a, #8a8a8a 5px, #b6b6b6 990px, #8c8c8c);
}
.panel {
  position: relative;
  box-sizing: border-box;
  flex: none;
  display: flex;
  flex-direction: column;
  border-right: 1px solid #cfcfcf;
}
.pbody { height: 80px; display: flex; box-sizing: border-box; padding-top: 6px; }
.pfoot {
  position: relative;
  height: 18px;
  display: flex;
  align-items: center;
  justify-content: center;
  gap: 5px;
  padding-bottom: 2px;
  color: #555;
  background: linear-gradient(#e4e4e4, #f0f0f0);
  border-top: 1px solid #e0e0e0;
  box-sizing: border-box;
}
.pfoot.cornered { padding-right: 14px; }
.pcorner { position: absolute; right: 5px; top: 5px; }
.big { display: flex; flex-direction: column; align-items: center; flex: none; margin-top: -2px; }
.biglabel { line-height: 18px; color: #444; }
.col { display: flex; flex-direction: column; gap: 2px; }
.row { display: flex; height: 22px; }
.cell {
  width: 24px;
  height: 22px;
  box-sizing: border-box;
  display: flex;
  align-items: center;
  justify-content: center;
  background: linear-gradient(#f8f8f8, #ececec);
  outline: 1px solid #e2e2e2;
  outline-offset: -1px;
}
.split {
  width: 11px;
  height: 22px;
  display: flex;
  align-items: center;
  justify-content: center;
  background: linear-gradient(#f8f8f8, #ececec);
  outline: 1px solid #e2e2e2;
  outline-offset: -1px;
}
.gap-s { width: 2px; }
.gap-g { width: 4px; }
.combo {
  width: 100px;
  height: 22px;
  display: flex;
  align-items: center;
  box-sizing: border-box;
  padding: 0 5px 0 2px;
  background: linear-gradient(#f8f8f8, #e8e8e8);
  outline: 1px solid #e2e2e2;
  outline-offset: -1px;
  color: #333;
}
.comboarrow { margin-left: auto; }
.tri { border: 4px solid transparent; border-top: 4px solid #444; border-bottom: 0; }
.tri.small { border-width: 3px; border-bottom: 0; margin-top: 1px; }
.tall {
  align-items: center;
  padding-top: 5px;
  background: linear-gradient(#f8f8f8, #ececec);
}
.talllabel { line-height: 16px; color: #444; }
.talltri { margin-top: auto; margin-bottom: 5px; }
.whiteline { height: 1px; flex: none; background: #eee; }

.docbar {
  height: 30px;
  flex: none;
  display: flex;
  align-items: flex-end;
  padding-left: 22px;
  background: linear-gradient(#a0a0a0, #767676);
}
.doctab {
  width: 132px;
  height: 25px;
  box-sizing: border-box;
  display: flex;
  align-items: center;
  padding: 0 11px 5px 14px;
  background: linear-gradient(#b8b8b8, #8c8c8c);
  clip-path: polygon(0 100%, 9px 0, 118px 0, 132px 100%);
  color: #333;
  font: 12.2px "Open Sans", sans-serif;
}
.docx { margin-left: auto; margin-right: 6px; color: #808080; font-size: 11px; font-family: "DejaVu Sans", sans-serif; font-weight: 700; }
.docplus {
  width: 23px;
  height: 17px;
  margin: 0 0 5px 2px;
  box-sizing: border-box;
  border: 1px solid #5e5e5e;
  border-radius: 7px 7px 3px 3px;
  background: #808080;
  color: #aaa;
  text-align: center;
  line-height: 13px;
  font-size: 12px;
}
.darkgap { height: 3px; flex: none; background: #5a5a5a; }

.viewport {
  position: relative;
  height: 475px;
  flex: none;
  margin: 0 6px;
  background: #000;
}
.vlabel { position: absolute; left: 25px; top: 6px; color: #c4b434; line-height: 16px; }
.menu {
  position: absolute;
  left: 43px;
  top: 23px;
  width: 174px;
  height: 338px;
  box-sizing: border-box;
  padding: 2px;
  background: linear-gradient(90deg, #f0f0f0 28px, #dcdcdc 28px, #dcdcdc 29px, #f0f0f0 29px);
  border: 1px solid #a8a8a8;
  color: #222;
}
.mitem {
  position: relative;
  height: 22px;
  display: flex;
  align-items: center;
  padding-left: 32px;
  line-height: 22px;
}
.mitem.disabled { height: 20px; color: #8c8c8c; }
.marrow {
  position: absolute;
  right: 8px;
  top: 6px;
  border: 4px solid transparent;
  border-left: 4px solid #8a8a8a;
  border-right: 0;
}
.msep { margin: 5px 0 2px 28px; height: 1px; background: #dcdcdc; border: 0; }
.msep:first-of-type { margin-top: 6px; }
.check {
  position: absolute;
  left: 1px;
  top: 1px;
  width: 21px;
  height: 21px;
  box-sizing: border-box;
  border: 1px solid #c6cde4;
  border-radius: 2px;
  background: #e8ebf5;
  display: flex;
  align-items: center;
  justify-content: center;
}
.mitem.hover {
  margin-left: 1px;
  padding-left: 30px;
  width: 167px;
  box-sizing: border-box;
  border: 1px solid #c5d0e8;
  border-radius: 2px;
  background: linear-gradient(#f6f7fb, #eceef8);
}
.cursor { position: absolute; left: 64px; top: 129px; }
.vpctl { position: absolute; right: 11px; top: 10px; display: flex; align-items: center; gap: 10px; color: #eee; }
.vmin { width: 10px; height: 3px; background: #e8e8e8; margin-top: 3px; }
.vmax { width: 7px; height: 7px; border: 1.5px solid #e8e8e8; box-shadow: 2px -2px 0 -0.5px #aaa; }
.vclose { font: 700 12px "DejaVu Sans", sans-serif; }
.cube { position: absolute; left: 905px; top: 30px; }
.wcs {
  position: absolute;
  left: 933px;
  top: 139px;
  width: 47px;
  height: 17px;
  box-sizing: border-box;
  display: flex;
  align-items: center;
  padding: 0 4px;
  background: #83838d;
  border: 1px solid #9a9aa4;
  border-radius: 4px;
  color: #3e3e4e;
  font: 11px "Liberation Sans", sans-serif;
}
.wcs i { margin-left: auto; width: 8px; height: 1px; background: #aaa; }
.navbar {
  position: absolute;
  left: 976px;
  top: 181px;
  width: 32px;
  height: 212px;
  border-radius: 3px;
  background: #3e3e3e;
}
.ucs { position: absolute; left: 8px; top: 391px; }

.layouts {
  height: 13px;
  flex: none;
  display: flex;
  align-items: center;
  margin: 0 6px;
  background: #f4f4f4;
  color: #222;
}
.lnav { width: 60px; flex: none; }
.ltab { line-height: 13px; padding: 0 5px; white-space: nowrap; }
.ltab.on {
  width: 40px;
  box-sizing: border-box;
  height: 13px;
  background: #111;
  color: #fff;
  padding: 0 0 0 7px;
  clip-path: polygon(0 0, 100% 0, 88% 100%, 8% 100%);
}
.lslash { width: 1px; height: 14px; background: #555; margin: 0 0.5px; transform: skewX(-25deg); }
.lgap { height: 7px; flex: none; background: linear-gradient(#666, #7e7e7e); }

.command { height: 67px; flex: none; display: flex; margin: 0 2px 0 5px; }
.cmdside {
  width: 22px;
  flex: none;
  display: flex;
  flex-direction: column;
  align-items: center;
  background: linear-gradient(#8a8a8a, #4c4c4c);
}
.cmdgrip {
  width: 17px;
  height: 5px;
  margin-top: 5px;
  background-image: radial-gradient(#bbb 0.6px, transparent 0.7px);
  background-size: 2px 2px;
}
.cmdx { margin: 2px 0 2px; color: #f0f0f0; font: 700 14px "DejaVu Sans", sans-serif; line-height: 22px; }
.cmdmain { flex: 1; display: flex; flex-direction: column; min-width: 0; }
.cmdhist {
  height: 44px;
  box-sizing: border-box;
  padding: 10px 0 0 3px;
  background: #c6c6c6;
  border-bottom: 1px solid #888;
  color: #222;
  font: 11.65px/15px "DejaVu Sans Mono", monospace;
  white-space: pre;
}
.cjk { font-family: "Noto Sans CJK SC", sans-serif; font-size: 12.6px; }
.cmdinput { flex: 1; display: flex; align-items: center; background: #fff; padding: 0 0 2px 4px; }
.cmddrop { margin-left: 4px; border-top-color: #999; }
.cmdph { margin-left: 7px; color: #aaa; font-style: italic; font-size: 12.5px; }

.status {
  height: 26px;
  flex: none;
  display: flex;
  align-items: center;
  box-sizing: border-box;
  border-top: 1px solid #222;
  padding-bottom: 2px;
  background: linear-gradient(#b4b4b4, #8c8c8c 60%, #4e4e4e);
  color: #222;
}
.coords {
  width: 209px;
  flex: none;
  padding-left: 15px;
  box-sizing: border-box;
  font: 11.2px "Liberation Sans", sans-serif;
  letter-spacing: 0.55px;
  color: #333;
}
.stgroup { display: flex; width: 451px; flex: none; }
.st {
  width: 22px;
  height: 23px;
  flex: none;
  display: flex;
  align-items: center;
  justify-content: center;
  box-sizing: border-box;
  border-right: 1px solid #9c9c9c;
  background: linear-gradient(#acacac, #9a9a9a 60%, #707070);
}
.st.act { background: linear-gradient(#d4e6ea, #b0d4dc 70%, #7aa0a8); }
.st.lite { background: linear-gradient(#c0c0c0, #a8a8a8); border-right: 0; }
.stmodel {
  width: 28px;
  flex: none;
  margin-left: 13px;
  padding-left: 1px;
  box-sizing: border-box;
  font-size: 12.5px;
  line-height: 23px;
  background: linear-gradient(#c0c0c0, #a8a8a8);
  color: #111;
}
.annot {
  display: flex;
  align-items: center;
  gap: 2px;
  width: 52px;
  height: 23px;
  margin-left: 19px;
  flex: none;
  padding-left: 3px;
  box-sizing: border-box;
  background: linear-gradient(#c0c0c0, #a8a8a8);
  font: 11.5px "Liberation Sans", sans-serif;
  color: #222;
}
.tri.black { border-top-color: #111; margin-top: -2px; }
.stsep { width: 8px; height: 23px; background: linear-gradient(#777, #555); }
.lamp {
  width: 33px;
  height: 23px;
  flex: none;
  display: flex;
  justify-content: center;
  align-items: center;
  background: linear-gradient(#888, #aaa);
}
.lampdrop { margin-left: 5px; margin-right: -1px; }
.stgrip { margin-left: 2px; }
</style>
